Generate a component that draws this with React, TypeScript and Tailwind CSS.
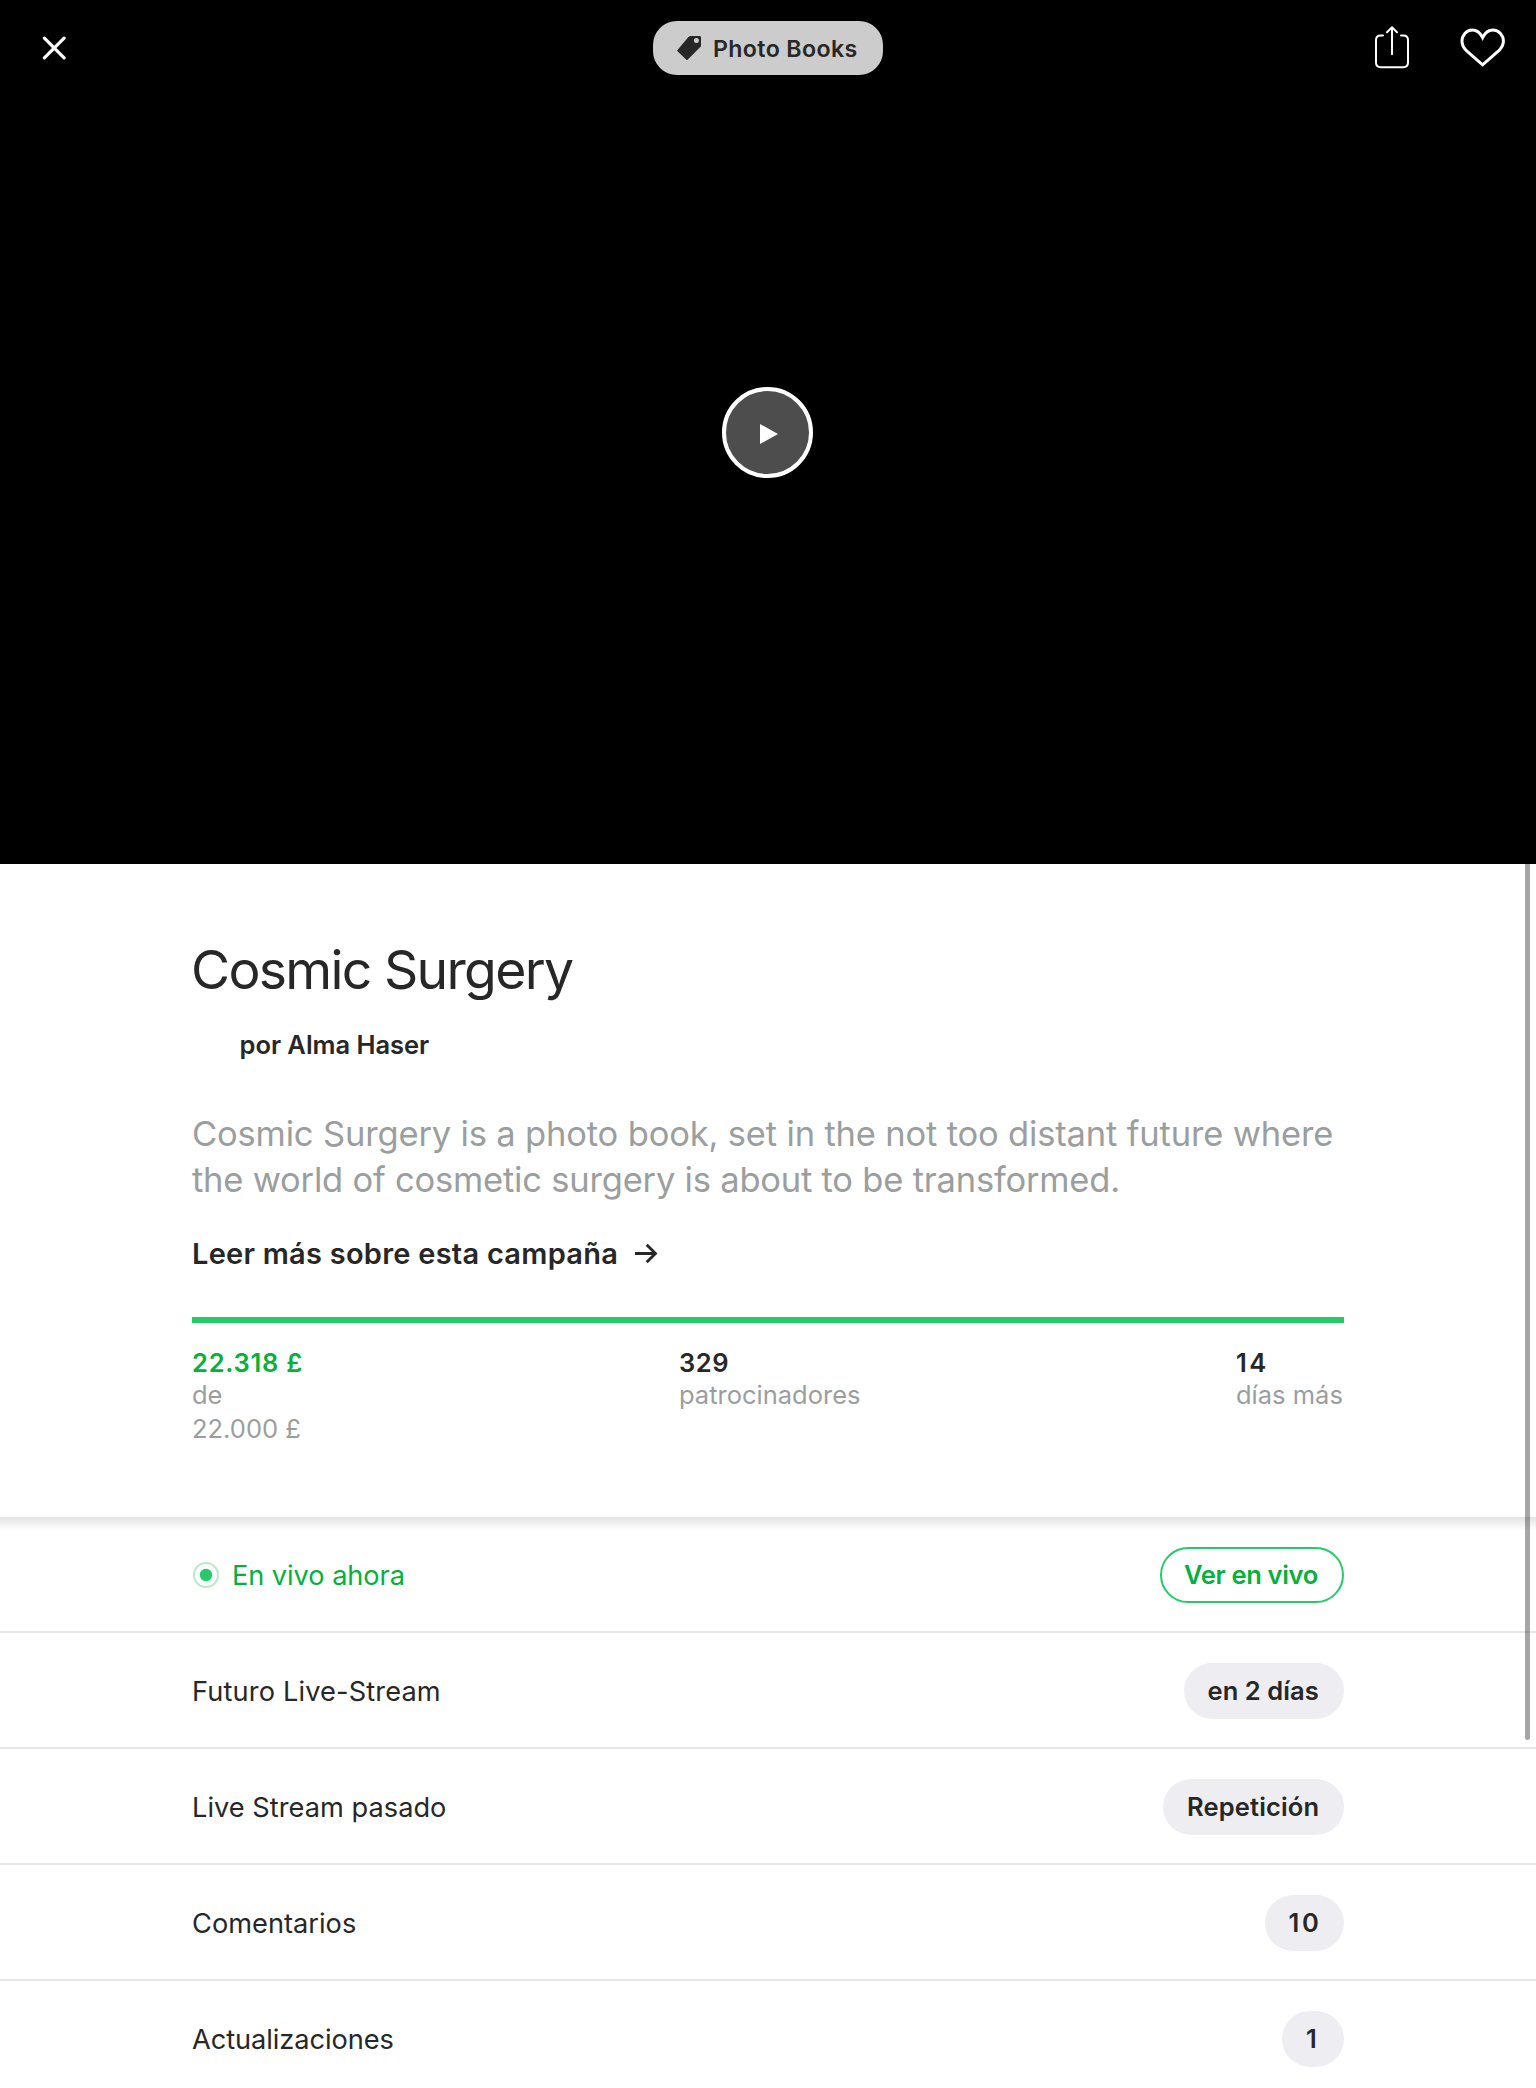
type Row = {
  label: string;
  labelClass: string;
  value: string;
  pillClass: string;
  live?: boolean;
};

const rows: Row[] = [
  {
    label: "En vivo ahora",
    labelClass: "text-[#05b03c] tracking-[-0.06px]",
    value: "Ver en vivo",
    pillClass: "w-[184px] border-2 border-[#25cb68] pl-[22px] text-[#05b03c] tracking-[-0.32px]",
    live: true,
  },
  {
    label: "Futuro Live-Stream",
    labelClass: "tracking-[0.14px]",
    value: "en 2 días",
    pillClass: "w-[160px] bg-[#eeedf2] pl-[23.5px] tracking-[0.06px]",
  },
  {
    label: "Live Stream pasado",
    labelClass: "tracking-[0.03px]",
    value: "Repetición",
    pillClass: "w-[181px] bg-[#eeedf2] pl-6 tracking-[0.16px]",
  },
  {
    label: "Comentarios",
    labelClass: "tracking-[0.02px]",
    value: "10",
    pillClass: "w-[79px] bg-[#eeedf2] pl-[23.5px] tracking-[2.6px]",
  },
  {
    label: "Actualizaciones",
    labelClass: "tracking-[-0.06px]",
    value: "1",
    pillClass: "w-[62px] bg-[#eeedf2] pl-6",
  },
];

function Hero() {
  return (
    <header className="relative flex h-[864px] items-center justify-center bg-black">
      <div className="absolute inset-x-0 top-0 flex h-24 items-center justify-between">
        <button aria-label="Cerrar" className="ml-[42px] w-[332px]">
          <svg width="25" height="25" viewBox="0 0 25 25" fill="none" stroke="#fff" strokeWidth="3.2" strokeLinecap="round">
            <path d="M2.4 2.1 22.1 21.8M22.1 2.1 2.4 21.8" />
          </svg>
        </button>
        <div className="flex h-[54px] w-[230px] items-center rounded-[24px] bg-[#cccccc] pl-6 text-[#272727]">
          <svg width="24" height="24" viewBox="0 0 24 24" fill="currentColor">
            <path
              fillRule="evenodd"
              d="M13.3 0H22.6Q24 0 24 1.4V10.3L10.6 23.7Q10 24.3 9.4 23.7L.5 15.2Q-.2 14.5.5 13.9L11.4 1ZM19.4 2.1a2.5 2.5 0 1 0 0 5 2.5 2.5 0 0 0 0-5Z"
            />
          </svg>
          <span className="ml-3 pt-0.5 text-[23.2px] leading-8 font-semibold tracking-[0.36px] whitespace-nowrap">Photo Books</span>
        </div>
        <div className="mr-[30px] flex w-[344px] items-start justify-end gap-[51px] pb-0.5">
          <svg width="34" height="44" viewBox="0 0 34 44" fill="none" stroke="#fff" strokeWidth="2" strokeLinecap="round" strokeLinejoin="round">
            <path d="M8 10.4H5.6Q1 10.4 1 15V37.6Q1 42.2 5.6 42.2H28.4Q33 42.2 33 37.6V15Q33 10.4 28.4 10.4H26" />
            <path d="M17 29.2V2.2M12 7.2 17 2.2 22 7.2" />
          </svg>
          <svg className="mt-[3px]" width="46" height="39" viewBox="0 0 46 39" fill="none" stroke="#fff" strokeWidth="3" strokeLinejoin="miter">
            <path d="M22.6 9.7C20.2 4.8 16.7 2.1 12.3 2.1 6.2 2.1 2 7.2 2 13.2 2 17.2 3.6 19.8 6.4 22.6L22.6 36.8 38.8 22.6C41.6 19.8 43.4 17.2 43.4 13.2 43.4 7.2 39 2.1 32.9 2.1 28.5 2.1 25 4.8 22.6 9.7Z" />
          </svg>
        </div>
      </div>
      <button
        aria-label="Reproducir"
        className="mr-px flex size-[91px] items-center justify-center rounded-full border-4 border-white bg-[#4d4d4d]"
      >
        <svg className="mt-[3px] ml-[2px]" width="18" height="20" viewBox="0 0 18 20" fill="#fff">
          <path d="M0 0 18 10 0 20Z" />
        </svg>
      </button>
    </header>
  );
}

function Stats() {
  return (
    <div className="mt-6 flex text-[25.5px] leading-8 text-[#9b9e9e]">
      <div className="w-[487px]">
        <p className="font-semibold tracking-[0.76px] text-[#05b03c]">22.318 £</p>
        <p>de</p>
        <p className="leading-[35px]">22.000 £</p>
      </div>
      <div className="w-[557px]">
        <p className="font-semibold tracking-[0.6px] text-[#272727]">329</p>
        <p>patrocinadores</p>
      </div>
      <div className="w-[108px]">
        <p className="font-semibold tracking-[2.5px] text-[#272727]">14</p>
        <p className="whitespace-nowrap">días más</p>
      </div>
    </div>
  );
}

export default function App() {
  return (
    <div className="relative h-[2088px] w-[1536px] overflow-hidden bg-white font-['Inter',sans-serif] text-[#272727]">
      <Hero />
      <section className="h-[653px] px-48 pt-[74px]">
        <h1 className="-ml-px text-[53.5px] leading-[64px] tracking-[-1.7px]">Cosmic Surgery</h1>
        <p className="mt-[27px] ml-[47.5px] text-[25.5px] leading-8 font-semibold tracking-[-0.03px]">por Alma Haser</p>
        <p className="mt-[50px] text-[34.5px] leading-[46px] whitespace-nowrap text-[#9b9e9e]">
          <span className="block tracking-[-0.16px]">
            Cosmic Surgery is a photo book, set in the not too distant future where
          </span>
          <span className="block tracking-[-0.2px]">the world of cosmetic surgery is about to be transformed.</span>
        </p>
        <a className="mt-[33px] flex items-center text-[29px] leading-9 font-semibold tracking-[0.25px]">
          Leer más sobre esta campaña
          <svg className="ml-[17px]" width="23" height="20" viewBox="0 0 23 20" fill="none" stroke="currentColor" strokeWidth="2.8">
            <path d="M0 9.5H20.5M11.7 .7 20.5 9.5 11.7 18.3" />
          </svg>
        </a>
        <div className="mt-[45px] h-1.5 bg-[#25cb68]" />
        <Stats />
      </section>
      <div className="bg-[linear-gradient(to_bottom,#e3e3e3_0px,#f0f0f0_6px,#fbfbfb_11px,#ffffff_14px)]">
        {rows.map((row) => (
          <div key={row.label} className="flex h-[116px] items-center justify-between border-b-2 border-[#e8e8e8] px-48 pt-0.5">
            <div className="flex items-center text-[27.2px] leading-9">
              {row.live && (
                <svg className="mr-[13px] ml-px" width="26" height="26" viewBox="0 0 26 26">
                  <circle cx="13" cy="13" r="12" fill="none" stroke="#b7eacb" strokeWidth="2" />
                  <circle cx="13" cy="13" r="6.2" fill="#25cb68" />
                </svg>
              )}
              <span className={`pt-0.5 ${row.labelClass}`}>{row.label}</span>
            </div>
            <div
              className={`flex h-14 items-center rounded-full text-[25.5px] leading-8 font-semibold whitespace-nowrap ${row.pillClass}`}
            >
              {row.value}
            </div>
          </div>
        ))}
      </div>
      <div className="absolute top-[864px] right-1.5 h-[876px] w-[5px] rounded-b-full bg-black/35" />
    </div>
  );
}
